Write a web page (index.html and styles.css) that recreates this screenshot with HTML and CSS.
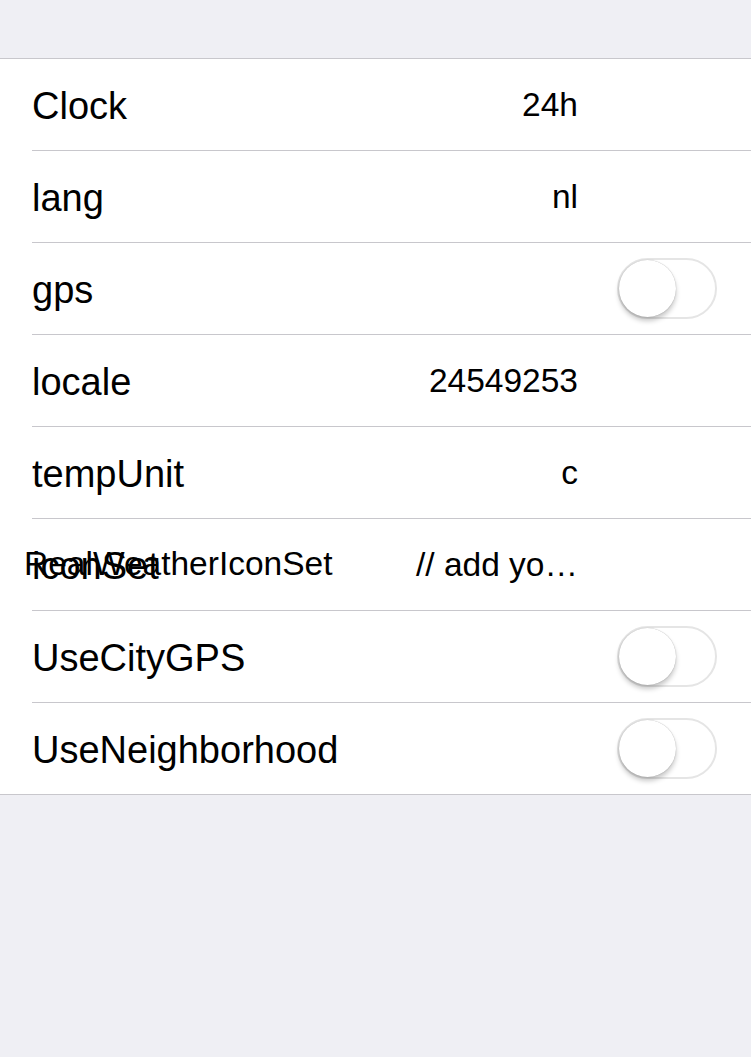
FILE: index.html
```html
<!DOCTYPE html>
<html lang="en">
<head>
    <meta charset="UTF-8">
    <meta name="viewport" content="width=device-width, initial-scale=1.0">
    <title>Settings</title>
    <link rel="stylesheet" href="styles.css">
</head>
<body>

    <ul class="settings">
        <li class="row">
            <div class="cell">
                <span class="label">Clock</span>
                <span class="value">24h</span>
            </div>
        </li>
        <li class="row">
            <div class="cell">
                <span class="label">lang</span>
                <span class="value">nl</span>
            </div>
        </li>
        <li class="row">
            <div class="cell switch-cell">
                <span class="label">gps</span>
                <span class="switch"><span class="knob"></span></span>
            </div>
        </li>
        <li class="row">
            <div class="cell">
                <span class="label">locale</span>
                <span class="value">24549253</span>
            </div>
        </li>
        <li class="row">
            <div class="cell">
                <span class="label">tempUnit</span>
                <span class="value">c</span>
            </div>
        </li>
        <li class="row">
            <div class="cell">
                <span class="label">iconSet</span>
                <span class="overlay-text">RealWeatherIconSet</span>
                <span class="value">// add yo…</span>
            </div>
        </li>
        <li class="row">
            <div class="cell switch-cell">
                <span class="label">UseCityGPS</span>
                <span class="switch"><span class="knob"></span></span>
            </div>
        </li>
        <li class="row">
            <div class="cell switch-cell">
                <span class="label">UseNeighborhood</span>
                <span class="switch"><span class="knob"></span></span>
            </div>
        </li>
    </ul>

</body>
</html>
```

FILE: styles.css
```css
/* Page Setup */
body {
    margin: 0;
    padding: 0;
    background-color: #efeff4;
    color: #000;
    font-family: "Liberation Sans", Arial, sans-serif;
    min-height: 1057px;
}

/* Grouped List */
.settings {
    list-style: none;
    margin: 58px 0 0 0;
    padding: 0;
    background: #fff;
    border-top: 1px solid #c8c7cc;
    border-bottom: 1px solid #c8c7cc;
}

.row {
    padding-left: 32px;
}

.cell {
    position: relative;
    display: flex;
    align-items: center;
    height: 91px;
    padding-right: 173px;
    border-bottom: 1px solid #c8c7cc;
}

.row:last-child .cell {
    border-bottom: none;
}

.switch-cell {
    padding-right: 34px;
}

.label {
    font-size: 38px;
    margin-top: 4px;
}

.value {
    margin-left: auto;
    font-size: 33.5px;
}

/* Text that spills over the label */
.overlay-text {
    position: absolute;
    left: -8px;
    top: 26px;
    font-size: 33.5px;
}

/* Switch */
.switch {
    margin-left: auto;
    box-sizing: border-box;
    width: 100px;
    height: 61px;
    border: 2px solid #e5e5e5;
    border-radius: 31px;
    display: flex;
    align-items: center;
    background: #fff;
}

.knob {
    width: 57px;
    height: 57px;
    border-radius: 50%;
    background: #fff;
    box-shadow: 0 4px 5px rgba(0, 0, 0, 0.22), 0 0 1px rgba(0, 0, 0, 0.35);
}
```
